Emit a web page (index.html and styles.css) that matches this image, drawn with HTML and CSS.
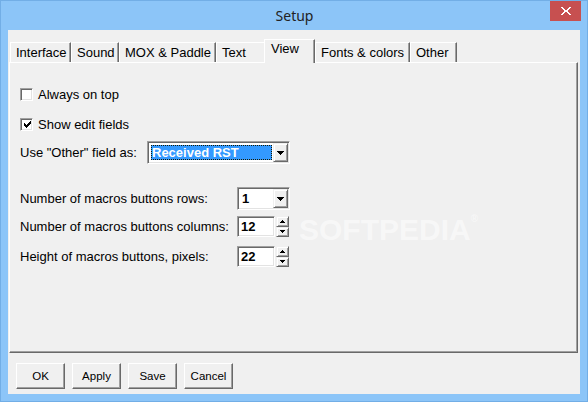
FILE: index.html
```html
<!DOCTYPE html>
<html lang="en">
<head>
<meta charset="utf-8">
<title>Setup</title>
<link rel="stylesheet" href="styles.css">
</head>
<body>
<div class="window">
  <div class="titlebar">
    <span class="title-spacer"></span>
    <span class="title">Setup</span>
    <button class="close" aria-label="Close">
      <svg width="10" height="8" viewBox="0 0 10 8"><path d="M0 0h2v1h1v1h1v1h2V2h1V1h1V0h2v1H9v1H8v1H7v2h1v1h1v1h1v1H8V7H7V6H6V5H4v1H3v1H2v1H0V7h1V6h1V5h1V3H2V2H1V1H0z" fill="#fff"/></svg>
    </button>
  </div>
  <div class="client">
    <div class="tabs">
      <div class="tab w-interface">Interface</div>
      <div class="tab w-sound">Sound</div>
      <div class="tab w-mox">MOX &amp; Paddle</div>
      <div class="tab w-text">Text</div>
      <div class="tab active w-view">View</div>
      <div class="tab w-fonts">Fonts &amp; colors</div>
      <div class="tab w-other">Other</div>
    </div>
    <div class="panel">
      <div class="row r1">
        <span class="check"></span>
        <span class="check-label">Always on top</span>
      </div>
      <div class="row r2">
        <span class="check">
          <svg width="7" height="7" viewBox="0 0 7 7"><path d="M6 0h1v3H6v1H5v1H4v1H3v1H2V6H1V5H0V2h1v1h1v1h1V3h1V2h1V1h1z" fill="#000"/></svg>
        </span>
        <span class="check-label">Show edit fields</span>
      </div>
      <div class="row r3">
        <span class="label label-short">Use "Other" field as:</span>
        <div class="combo combo-wide">
          <span class="combo-value selected">Received RST</span>
          <span class="ddbtn"><svg width="7" height="4" viewBox="0 0 7 4"><path d="M0 0h7v1H0zM1 1h5v1H1zM2 2h3v1H2zM3 3h1v1H3z" fill="#000"/></svg></span>
        </div>
      </div>
      <div class="row r4">
        <span class="label label-long">Number of macros buttons rows:</span>
        <div class="combo combo-narrow">
          <span class="combo-value">1</span>
          <span class="ddbtn"><svg width="7" height="4" viewBox="0 0 7 4"><path d="M0 0h7v1H0zM1 1h5v1H1zM2 2h3v1H2zM3 3h1v1H3z" fill="#000"/></svg></span>
        </div>
      </div>
      <div class="row r5">
        <span class="label label-long">Number of macros buttons columns:</span>
        <div class="spin">
          <span class="edit">12</span>
          <span class="updown">
            <span class="sbtn"><svg width="5" height="3" viewBox="0 0 5 3"><path d="M2 0h1v1H2zM1 1h3v1H1zM0 2h5v1H0z" fill="#000"/></svg></span>
            <span class="sbtn"><svg width="5" height="3" viewBox="0 0 5 3"><path d="M0 0h5v1H0zM1 1h3v1H1zM2 2h1v1H2z" fill="#000"/></svg></span>
          </span>
        </div>
      </div>
      <div class="row r6">
        <span class="label label-long">Height of macros buttons, pixels:</span>
        <div class="spin">
          <span class="edit">22</span>
          <span class="updown">
            <span class="sbtn"><svg width="5" height="3" viewBox="0 0 5 3"><path d="M2 0h1v1H2zM1 1h3v1H1zM0 2h5v1H0z" fill="#000"/></svg></span>
            <span class="sbtn"><svg width="5" height="3" viewBox="0 0 5 3"><path d="M0 0h5v1H0zM1 1h3v1H1zM2 2h1v1H2z" fill="#000"/></svg></span>
          </span>
        </div>
      </div>
      <span class="watermark">SOFTPEDIA<sup>®</sup></span>
    </div>
    <div class="buttons">
      <button class="btn">OK</button>
      <button class="btn">Apply</button>
      <button class="btn">Save</button>
      <button class="btn">Cancel</button>
    </div>
  </div>
</div>
</body>
</html>
```
FILE: styles.css
```css
* { box-sizing: border-box; }

html, body {
  margin: 0;
  padding: 0;
}

body {
  width: 588px;
  height: 402px;
  overflow: hidden;
  font-family: "Liberation Sans", Arial, sans-serif;
  font-size: 13px;
  color: #000;
}

.window {
  width: 588px;
  height: 402px;
  background: #8cc5f8;
  border: 1px solid #72aee6;
}

.titlebar {
  height: 29px;
  display: grid;
  grid-template-columns: 1fr auto 1fr;
  padding: 0 6px 0 7px;
}

.title {
  font-family: "Noto Sans", "Open Sans", sans-serif;
  font-size: 14px;
  color: #222;
  align-self: center;
  line-height: 16px;
  padding-top: 1px;
}

.close {
  justify-self: end;
  align-self: start;
  width: 31px;
  height: 20px;
  border: 0;
  padding: 0;
  background: #c75050;
  display: flex;
  align-items: center;
  justify-content: center;
}

.client {
  margin: 0 7px;
  height: 364px;
  background: #f0f0f0;
  padding: 9px 2px 0 1px;
}

/* Tabs */
.tabs {
  display: flex;
  align-items: flex-end;
  height: 23px;
  padding-left: 1px;
}

.tab {
  height: 20px;
  background: #f0f0f0;
  border-top: 1px solid #fff;
  border-left: 1px solid #fff;
  border-right: 1px solid #696969;
  box-shadow: inset -1px 0 #a0a0a0;
  display: flex;
  align-items: center;
  justify-content: flex-start;
  padding: 0 0 1px 5px;
  font-size: 13px;
  line-height: 15px;
  white-space: nowrap;
}

.tab.active {
  height: 24px;
  margin-bottom: -1px;
  margin-left: -2px;
  position: relative;
  z-index: 1;
  padding: 0 0 6px 6px;
}

.w-interface { width: 61px; }
.w-sound { width: 48px; }
.w-mox { width: 97px; }
.w-text { width: 50px; }
.w-view { width: 51px; }
.w-fonts { width: 95px; }
.w-other { width: 47px; }

/* Panel */
.panel {
  position: relative;
  height: 291px;
  border-top: 1px solid #fff;
  border-left: 1px solid #fff;
  border-right: 1px solid #696969;
  border-bottom: 1px solid #696969;
  box-shadow: inset -1px -1px #a0a0a0;
  padding: 25px 0 0 10px;
}

.row {
  display: flex;
  align-items: center;
  white-space: nowrap;
}

.r1 { height: 13px; }
.r2 { height: 13px; margin-top: 17px; }
.r3 { height: 23px; margin-top: 10px; }
.r4 { height: 23px; margin-top: 23px; }
.r5 { height: 21px; margin-top: 6px; }
.r6 { height: 21px; margin-top: 9px; }

.check {
  width: 13px;
  height: 13px;
  flex-shrink: 0;
  background: #fff;
  border: 1px solid;
  border-color: #a0a0a0 #fff #fff #a0a0a0;
  box-shadow: inset 1px 1px #696969, inset -1px -1px #e3e3e3;
  display: flex;
  align-items: center;
  justify-content: center;
  padding: 0 0 0 1px;
}

.check-label {
  margin-left: 5px;
}

.label {
  flex-shrink: 0;
  overflow: visible;
}

.label-short { width: 127px; }
.label-long { width: 217px; }

/* Combo boxes */
.combo {
  display: flex;
  height: 23px;
  background: #fff;
  border: 1px solid;
  border-color: #a0a0a0 #fff #fff #a0a0a0;
  box-shadow: inset 1px 1px #696969, inset -1px -1px #e3e3e3;
  padding: 1px;
}

.combo-wide { width: 143px; }
.combo-narrow { width: 53px; }

.combo-value {
  flex: 1;
  margin: 2px 1px 2px 2px;
  font-weight: bold;
  font-size: 13px;
  line-height: 13px;
  padding-left: 1px;
  display: flex;
  align-items: center;
}

.combo-value.selected {
  background: #3399ff;
  color: #fff;
  border: 1px dotted #1a1a00;
  padding-left: 0;
}

.ddbtn {
  width: 15px;
  height: 19px;
  flex-shrink: 0;
  background: #f0f0f0;
  border: 1px solid;
  border-color: #f0f0f0 #696969 #696969 #f0f0f0;
  box-shadow: inset 1px 1px #fff, inset -1px -1px #a0a0a0;
  display: flex;
  align-items: center;
  justify-content: center;
  padding: 1px 0 0 0;
}

/* Spin edits */
.spin {
  display: flex;
  align-items: flex-start;
  gap: 1px;
}

.edit {
  width: 38px;
  height: 21px;
  background: #fff;
  border: 1px solid;
  border-color: #a0a0a0 #fff #fff #a0a0a0;
  box-shadow: inset 1px 1px #696969, inset -1px -1px #e3e3e3;
  font-weight: bold;
  font-size: 13px;
  line-height: 15px;
  padding: 2px 0 0 3px;
}

.updown {
  display: flex;
  flex-direction: column;
  width: 13px;
  height: 21px;
}

.sbtn {
  flex: 1;
  background: #f0f0f0;
  border: 1px solid;
  border-color: #f0f0f0 #696969 #696969 #f0f0f0;
  box-shadow: inset 1px 1px #fff, inset -1px -1px #a0a0a0;
  display: flex;
  align-items: center;
  justify-content: center;
}

.watermark {
  position: absolute;
  left: 289px;
  top: 150px;
  font-family: "Liberation Sans", Arial, sans-serif;
  font-weight: bold;
  font-size: 30px;
  letter-spacing: 0;
  color: rgba(255, 255, 255, 0.5);
  pointer-events: none;
}

.watermark sup {
  font-size: 10px;
  vertical-align: top;
}

/* Bottom buttons */
.buttons {
  display: flex;
  gap: 7px;
  margin-top: 10px;
  padding-left: 7px;
}

.btn {
  width: 49px;
  height: 26px;
  padding: 0;
  background: #f0f0f0;
  border: 1px solid;
  border-color: #fff #696969 #696969 #fff;
  box-shadow: inset -1px -1px #a0a0a0;
  font-family: "Liberation Sans", Arial, sans-serif;
  font-size: 11.5px;
  color: #000;
}
```
